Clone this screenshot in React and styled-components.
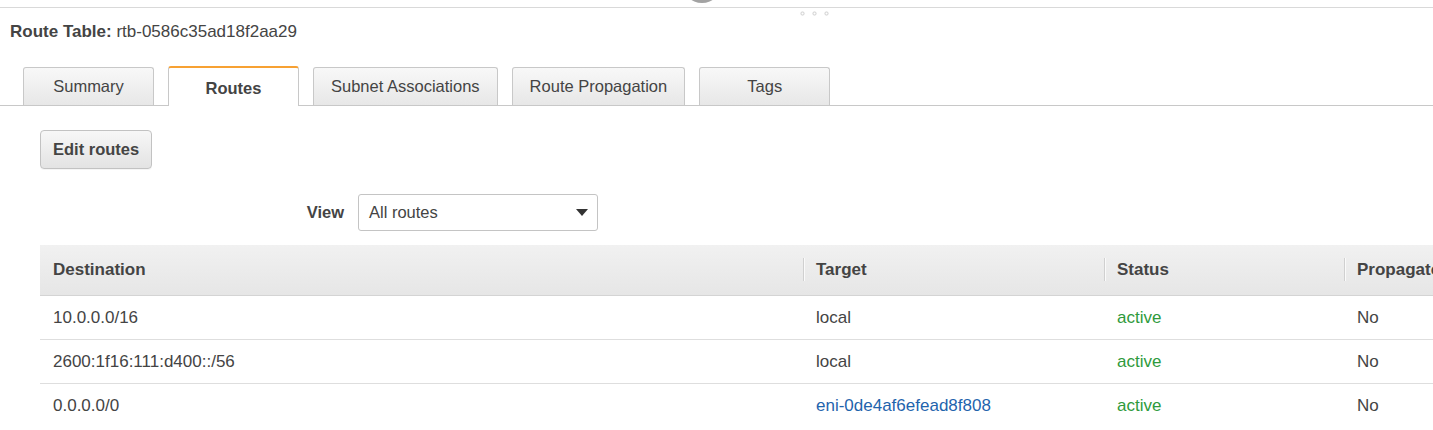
import React from 'react';
import styled, { createGlobalStyle } from 'styled-components';

const GlobalStyle = createGlobalStyle`
  html, body {
    margin: 0;
    padding: 0;
    background: #fff;
    overflow: hidden;
  }
  body {
    font-family: "Liberation Sans", Arial, Helvetica, sans-serif;
    color: #444;
  }
`;

const Page = styled.div`
  width: 1433px;
  height: 430px;
  overflow: hidden;
  position: relative;
`;

const TopBar = styled.div`
  height: 7px;
  border-bottom: 1px solid #d9d9d9;
  position: relative;
`;

const Handle = styled.div`
  position: absolute;
  left: 682px;
  top: -37px;
  width: 40px;
  height: 40px;
  border-radius: 50%;
  background: #a3a3a3;
`;

const Grip = styled.svg`
  position: absolute;
  left: 800px;
  top: 11px;
`;

const Title = styled.div`
  margin: 14px 0 0 10px;
  font-size: 17px;
  line-height: 20px;
  color: #444;

  b {
    font-weight: bold;
  }
`;

const TabBar = styled.div`
  display: flex;
  align-items: flex-end;
  gap: 14px;
  margin-top: 24px;
  padding-left: 23px;
  border-bottom: 1px solid #c8c8c8;
  height: 39px;
`;

const Tab = styled.div`
  box-sizing: border-box;
  min-width: 131px;
  padding: 0 17px;
  height: ${p => (p.active ? '40px' : '38px')};
  margin-bottom: ${p => (p.active ? '-1px' : '0')};
  display: flex;
  align-items: center;
  justify-content: center;
  font-size: 16.5px;
  color: #444;
  font-weight: ${p => (p.active ? 'bold' : 'normal')};
  border: 1px solid #c8c8c8;
  border-bottom: none;
  border-top: ${p => (p.active ? '2px solid #f7a133' : '1px solid #c8c8c8')};
  border-radius: 3px 3px 0 0;
  background: ${p => (p.active ? '#fff' : 'linear-gradient(#f8f8f8, #e7e7e7)')};
  padding-top: ${p => (p.active ? '3px' : '0')};
`;

const Toolbar = styled.div`
  padding: 24px 0 0 40px;
`;

const Button = styled.button`
  box-sizing: border-box;
  height: 39px;
  padding: 0 12px;
  font-family: inherit;
  font-size: 16.5px;
  font-weight: bold;
  color: #444;
  border: 1px solid #c2c2c2;
  border-radius: 4px;
  background: linear-gradient(#f7f7f7, #e3e3e3);
  box-shadow: 0 1px 0 rgba(0, 0, 0, 0.04);
`;

const FilterRow = styled.div`
  display: flex;
  align-items: center;
  gap: 14px;
  margin-top: 25px;
  padding-left: 40px;
`;

const FilterLabel = styled.label`
  width: 304px;
  text-align: right;
  font-size: 16.5px;
  font-weight: bold;
  color: #444;
`;

const Select = styled.div`
  box-sizing: border-box;
  width: 240px;
  height: 37px;
  border: 1px solid #c4c4c4;
  border-radius: 3px;
  background: #fff;
  display: flex;
  align-items: center;
  justify-content: space-between;
  padding: 0 9px 0 10px;
  font-size: 16.5px;
  color: #444;
`;

const Caret = styled.span`
  width: 0;
  height: 0;
  border-left: 6px solid transparent;
  border-right: 6px solid transparent;
  border-top: 7px solid #333;
`;

const TableWrap = styled.div`
  margin-top: 14px;
  padding-left: 40px;
`;

const Table = styled.table`
  border-collapse: collapse;
  table-layout: fixed;
  width: 1604px;
  font-size: 17px;
`;

const HeadCell = styled.th`
  height: 50px;
  padding: 0 13px;
  text-align: left;
  font-weight: bold;
  color: #444;
  background: linear-gradient(#f1f1f1, #e6e6e6);
  border-bottom: 1px solid #d4d4d4;
  position: relative;

  &::before {
    content: '';
    display: ${p => (p.divider ? 'block' : 'none')};
    position: absolute;
    left: 0;
    top: 13px;
    bottom: 14px;
    width: 1px;
    background: #d0d0d0;
    box-shadow: 1px 0 0 #fafafa;
  }
`;

const Row = styled.tr`
  & + & td {
    border-top: 1px solid #dedede;
  }
`;

const Cell = styled.td`
  height: 43px;
  padding: 0 13px;
  color: ${p => (p.tone === 'ok' ? '#2f9a3c' : p.tone === 'link' ? '#1f64ad' : '#444')};
`;

const routes = [
  { dest: '10.0.0.0/16', target: 'local', status: 'active', prop: 'No' },
  { dest: '2600:1f16:111:d400::/56', target: 'local', status: 'active', prop: 'No' },
  { dest: '0.0.0.0/0', target: 'eni-0de4af6efead8f808', status: 'active', prop: 'No', link: true },
];

const tabs = ['Summary', 'Routes', 'Subnet Associations', 'Route Propagation', 'Tags'];

export default function App() {
  return (
    <Page>
      <GlobalStyle />
      <TopBar>
        <Handle />
        <Grip width="30" height="5" viewBox="0 0 30 5">
          <rect x="1" y="1" width="3" height="3" rx="1" fill="none" stroke="#c4c4c4" strokeWidth="0.8" />
          <rect x="13" y="1" width="3" height="3" rx="1" fill="none" stroke="#c4c4c4" strokeWidth="0.8" />
          <rect x="25" y="1" width="3" height="3" rx="1" fill="none" stroke="#c4c4c4" strokeWidth="0.8" />
        </Grip>
      </TopBar>
      <Title>
        <b>Route Table:</b> rtb-0586c35ad18f2aa29
      </Title>
      <TabBar>
        {tabs.map(t => (
          <Tab key={t} active={t === 'Routes'}>{t}</Tab>
        ))}
      </TabBar>
      <Toolbar>
        <Button>Edit routes</Button>
      </Toolbar>
      <FilterRow>
        <FilterLabel>View</FilterLabel>
        <Select>
          <span>All routes</span>
          <Caret />
        </Select>
      </FilterRow>
      <TableWrap>
        <Table>
          <colgroup>
            <col style={{ width: 763 }} />
            <col style={{ width: 301 }} />
            <col style={{ width: 240 }} />
            <col style={{ width: 300 }} />
          </colgroup>
          <thead>
            <tr>
              <HeadCell>Destination</HeadCell>
              <HeadCell divider>Target</HeadCell>
              <HeadCell divider>Status</HeadCell>
              <HeadCell divider>Propagated</HeadCell>
            </tr>
          </thead>
          <tbody>
            {routes.map(r => (
              <Row key={r.dest}>
                <Cell>{r.dest}</Cell>
                <Cell tone={r.link ? 'link' : undefined}>{r.target}</Cell>
                <Cell tone="ok">{r.status}</Cell>
                <Cell>{r.prop}</Cell>
              </Row>
            ))}
          </tbody>
        </Table>
      </TableWrap>
    </Page>
  );
}
